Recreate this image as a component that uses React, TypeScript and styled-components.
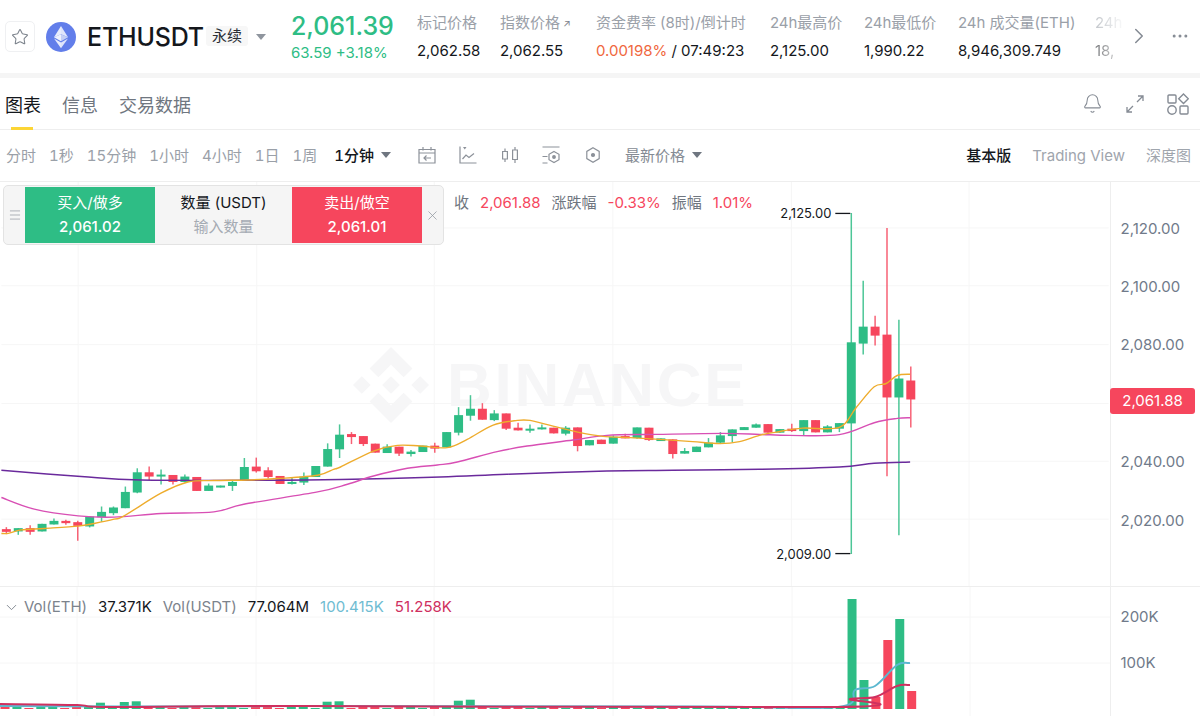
import { createGlobalStyle, styled } from "styled-components";
import { Bell, ChevronDown, ChevronRight, Ellipsis, Menu, Star, X } from "lucide-react";

const GREEN = "#2ebd85";
const RED = "#f6465d";

const GlobalStyle = createGlobalStyle`
  html, body {
    margin: 0;
    padding: 0;
    background: #fff;
    overflow: hidden;
  }
  * { box-sizing: border-box; }
  body {
    font-family: Inter, "Noto Sans CJK SC", sans-serif;
    color: #1e2329;
  }
`;

const Page = styled.div`
  width: 1200px;
  height: 716px;
  overflow: hidden;
  display: flex;
  flex-direction: column;
`;

/* top ticker */
const Ticker = styled.header`
  height: 78px;
  flex: none;
  display: flex;
  align-items: flex-start;
  border-bottom: 5px solid #f5f5f5;
  padding: 0 0 0 5px;
`;

const StarBox = styled.div`
  width: 30px;
  height: 31px;
  margin-top: 21px;
  border: 1px solid #eff0f2;
  border-radius: 5px;
  display: flex;
  align-items: center;
  justify-content: center;
  color: #7c838c;
`;

const Coin = styled.svg`
  width: 30px;
  height: 30px;
  margin: 22px 0 0 11px;
  flex: none;
`;

const Symbol = styled.div`
  margin: 21px 0 0 11px;
  font-size: 25px;
  line-height: 32px;
  font-weight: 500;
  letter-spacing: -0.2px;
  color: #14171c;
`;

const Perp = styled.div`
  margin: 26px 0 0 2px;
  padding: 0 6px;
  height: 20px;
  background: #f7f7f7;
  border-radius: 3px;
  font-size: 15px;
  line-height: 20px;
  color: #2b2f36;
`;

const Caret = styled.span<{ $dark?: boolean }>`
  display: inline-block;
  width: 0;
  height: 0;
  border-left: 5.5px solid transparent;
  border-right: 5.5px solid transparent;
  border-top: 6px solid ${(p) => (p.$dark ? "#6f7680" : "#8f959e")};
`;

const SymbolCaret = styled(Caret)`
  margin: 34px 0 0 8px;
`;

const PriceBlock = styled.div`
  margin: 11px 0 0 25px;
  width: 126px;
  flex: none;
`;

const LastPrice = styled.div`
  font-size: 25px;
  line-height: 30px;
  font-weight: 500;
  color: ${GREEN};
`;

const Change = styled.div`
  font-size: 15px;
  line-height: 20px;
  margin-top: 2px;
  color: ${GREEN};
`;

const Stats = styled.div`
  display: flex;
  width: 709px;
  flex: none;
  padding-top: 13px;
`;

const Stat = styled.div<{ $w: number }>`
  width: ${(p) => p.$w}px;
  flex: none;
`;

const FadedStat = styled(Stat)`
  mask-image: linear-gradient(to right, rgba(0, 0, 0, 0.6), transparent);
`;

const StatLabel = styled.div`
  font-size: 15px;
  line-height: 20px;
  color: #9aa0a8;
  white-space: nowrap;
  display: flex;
  align-items: center;
`;

const LinkMark = styled.span`
  margin-left: 3px;
  font-size: 10px;
  color: #7c838c;
`;

const StatValue = styled.div`
  margin-top: 8px;
  font-size: 15px;
  line-height: 20px;
  color: #14171c;
  white-space: nowrap;
`;

const Funding = styled.span`
  color: #f0673e;
`;

const TickerEnd = styled.div`
  margin-top: 23px;
  display: flex;
  align-items: center;
  gap: 18px;
  color: #858b94;
`;

/* tabs */
const TabBar = styled.nav`
  height: 52px;
  flex: none;
  display: flex;
  align-items: center;
  padding: 0 11px 0 5px;
  gap: 21px;
  border-bottom: 1px solid #eeeeee;
`;

const Tab = styled.div<{ $active?: boolean }>`
  position: relative;
  font-size: 18px;
  line-height: 55px;
  height: 52px;
  color: ${(p) => (p.$active ? "#14171c" : "#6f7680")};

  &::after {
    content: "";
    display: ${(p) => (p.$active ? "block" : "none")};
    position: absolute;
    left: 6px;
    bottom: 0;
    width: 22px;
    height: 3px;
    background: #fcd535;
  }
`;

const TabTools = styled.div`
  margin-left: auto;
  display: flex;
  align-items: center;
  gap: 23px;
  color: #858b94;
`;

/* chart toolbar */
const Toolbar = styled.div`
  height: 52px;
  flex: none;
  display: flex;
  align-items: center;
  padding: 0 9px 2px 6px;
  border-bottom: 1px solid #eeeeee;
  font-size: 15px;
  color: #9aa0a8;
`;

const Interval = styled.div<{ $active?: boolean }>`
  margin-right: 13px;
  white-space: nowrap;
  font-variant-numeric: tabular-nums;
  color: ${(p) => (p.$active ? "#14171c" : "#9aa0a8")};
  font-weight: ${(p) => (p.$active ? 500 : 400)};
`;

const ActiveInterval = styled(Interval)`
  margin: 0 7px 0 4px;
`;

const ToolIcons = styled.div`
  display: flex;
  gap: 21.5px;
  margin: 1px 0 0 26px;
  color: #8c9199;
`;

const PriceType = styled.div`
  margin-left: 22px;
  display: flex;
  align-items: center;
  gap: 7px;
  color: #858b94;
`;

const Views = styled.div`
  margin-left: auto;
  display: flex;
  align-items: baseline;
  gap: 21px;
`;

const ViewName = styled.div<{ $active?: boolean }>`
  color: ${(p) => (p.$active ? "#14171c" : "#9fa5ad")};
  font-weight: ${(p) => (p.$active ? 500 : 400)};
`;

/* chart panes */
const Pane = styled.section<{ $h: number }>`
  height: ${(p) => p.$h}px;
  flex: none;
  display: flex;
`;

const MainPane = styled(Pane)`
  border-bottom: 1px solid #eeeeee;
`;

const Canvas = styled.div`
  position: relative;
  width: 1110px;
  flex: none;
  overflow: hidden;
`;

const Drawing = styled.svg`
  position: absolute;
  inset: 0;
  width: 1110px;
  height: 100%;
`;

const Axis = styled.div<{ $top: number }>`
  position: relative;
  flex: 1;
  border-left: 1px solid #eeeeee;
  padding: ${(p) => p.$top}px 0 0 9.5px;
`;

const Tick = styled.div<{ $h: number }>`
  height: ${(p) => p.$h}px;
  display: flex;
  align-items: center;
  font-size: 15px;
  color: #707a8a;
`;

const PriceTag = styled.div`
  position: absolute;
  left: -1px;
  top: 206px;
  width: 85px;
  height: 26px;
  border-radius: 3px;
  background: ${RED};
  color: #fff;
  font-size: 15px;
  line-height: 26px;
  text-align: center;
`;

const Watermark = styled.div`
  position: absolute;
  left: 353px;
  top: 164px;
  display: flex;
  align-items: center;
  gap: 18px;
  color: #f6f6f7;
`;

const WatermarkText = styled.span`
  font-family: "Liberation Sans", sans-serif;
  font-size: 62px;
  line-height: 78px;
  font-weight: 700;
  letter-spacing: 2.7px;
`;

const OrderPanel = styled.div`
  position: absolute;
  left: 3px;
  top: 3px;
  width: 441px;
  height: 60px;
  display: flex;
  align-items: stretch;
  padding: 1px 0;
  background: #f5f5f5;
  border: 1px solid #e3e3e3;
  border-radius: 5px;
`;

const PanelEdge = styled.div<{ $w: number }>`
  width: ${(p) => p.$w}px;
  flex: none;
  display: flex;
  align-items: center;
  justify-content: center;
  color: #8f959e;
`;

const OrderButton = styled.div<{ $bg: string }>`
  width: 130px;
  flex: none;
  background: ${(p) => p.$bg};
  color: #fff;
  text-align: center;
  font-size: 15px;
  line-height: 24px;
  padding-top: 4px;
`;

const OrderPrice = styled.div`
  font-weight: 500;
`;

const QtyBox = styled.div`
  flex: 1;
  text-align: center;
  font-size: 15px;
  line-height: 24px;
  padding-top: 4px;
  color: #14171c;
`;

const QtyHint = styled.div`
  color: #a5abb3;
`;

const Legend = styled.div`
  position: absolute;
  left: 454px;
  top: 11px;
  display: flex;
  gap: 11px;
  font-size: 15px;
  line-height: 20px;
  color: #6f7680;
`;

const Down = styled.span`
  color: ${RED};
`;

const VolLegend = styled.div`
  position: absolute;
  left: 3px;
  top: 10px;
  display: flex;
  align-items: center;
  gap: 11px;
  font-size: 15px;
  line-height: 20px;
  color: #7c838c;
`;

const VolToggle = styled(ChevronDown)`
  margin-right: -7px;
`;

const VolNumber = styled.span<{ $c: string }>`
  color: ${(p) => p.$c};
`;

/* top, bottom, high, low in page pixels; g = rising */
type Candle = [string, number, number, number?, number?];

const candles: Candle[] = [
  ["r", 530, 532.7, 528, 535], ["g", 529, 532.3, 529, 535.7], ["r", 529, 532.7, 526, 535.7], ["g", 524.7, 532.3],
  ["g", 521.7, 525.3, 519.3], ["r", 521.7, 524, 520.7, 525.7], ["r", 523, 526.7, 521.7, 541.7], ["g", 517.3, 527.3, 517.3, 528.3],
  ["g", 512.7, 518, 507.3, 522.7], ["g", 508.3, 514, 507.3, 516], ["g", 492.7, 509, 487.3], ["g", 473, 493.3, 469, 494],
  ["r", 473, 477.3, 467.3, 480.7], ["g", 475.3, 477.3, 470.3, 485.3], ["r", 475.7, 482.7, 475.7, 485.3], ["g", 477.3, 482.7, 475.3, 483.3],
  ["r", 477.7, 491.7], ["g", 486.3, 491.7, 484.3], ["g", 486.3, 488.3], ["g", 482.7, 486.7, 480.7, 491.7],
  ["g", 467.7, 480.7, 458.7, 481.3], ["r", 467.3, 472, 458.3, 473.3], ["r", 471, 477.7, 468, 479.3], ["r", 476.7, 484.7],
  ["g", 482.7, 484.7, 478.7, 485.3], ["g", 477.3, 483.3, 473.3, 485.7], ["g", 466.7, 477.7], ["g", 449.7, 467.3, 444],
  ["g", 435.3, 450, 425, 458.7], ["r", 434.7, 437.7, 432.7, 444.7], ["r", 436.7, 444.7, 436.7, 446.7], ["r", 444.3, 453.3],
  ["g", 447.3, 453.7, 445], ["r", 447.3, 454.3, 447.3, 456.7], ["g", 452.3, 454.7, 450.7, 457.3], ["g", 446.3, 452.7],
  ["r", 446.3, 449.3, 443.3, 453.3], ["g", 432.7, 448], ["g", 415.7, 433.3, 407.7, 436], ["g", 409.3, 416.3, 395.7, 421.3],
  ["r", 409.3, 420.3, 403.7], ["g", 414, 420.7, 410.7, 421.7], ["r", 414, 429.3, 414, 430.7], ["r", 428.3, 431, 423.3],
  ["g", 429.3, 431.3, 425, 433.3], ["g", 428, 430, 425], ["r", 428.3, 434], ["g", 428.3, 434.3, 426.7, 436],
  ["r", 428, 446.7, 428, 452], ["g", 440.7, 446], ["r", 440.3, 444.7], ["g", 437.3, 444.3, 436],
  ["r", 436.7, 439, 434.3], ["g", 428, 438.7, 428, 439.3], ["r", 428.3, 440.7, 428.3, 441.7], ["g", 439, 441.7],
  ["r", 440, 454.7, 440, 459.3], ["g", 451.7, 454.3, 448.7], ["g", 447.3, 452.7], ["g", 443.3, 448, 438.7],
  ["g", 436, 443.3, 432.7, 444.7], ["g", 430, 436.7, 430, 442.7], ["g", 427.7, 430.7], ["g", 425, 428.3, 424],
  ["r", 424.7, 433.3], ["g", 429.7, 433.3], ["r", 429.3, 431.7, 424.3, 432.7], ["g", 420.7, 431.7, 420.7, 436],
  ["r", 420.7, 433], ["g", 427, 433, 425.7], ["g", 423.7, 429.3, 423.7, 432.7], ["g", 342.7, 424, 213, 555],
  ["g", 327, 344, 281, 355], ["r", 327, 336, 316, 346], ["r", 335, 398, 228, 477], ["g", 379, 398, 320, 536],
  ["r", 381, 400, 367, 428],
];

const candleX = (i: number) => 5 + i * 11.93;

type Pt = [number, number];

// catmull-rom through the points, so the averages bend like the real ones
function smooth(pts: Pt[]) {
  let d = `M${pts[0][0]} ${pts[0][1]}`;
  for (let i = 0; i < pts.length - 1; i++) {
    const p0 = pts[Math.max(i - 1, 0)];
    const p1 = pts[i];
    const p2 = pts[i + 1];
    const p3 = pts[Math.min(i + 2, pts.length - 1)];
    const k = 1 / 6;
    d += ` C${p1[0] + (p2[0] - p0[0]) * k} ${p1[1] + (p2[1] - p0[1]) * k} ${p2[0] - (p3[0] - p1[0]) * k} ${
      p2[1] - (p3[1] - p1[1]) * k
    } ${p2[0]} ${p2[1]}`;
  }
  return d;
}

const ma7: Pt[] = [
  [0, 534.3], [7, 534.3], [20, 530.7], [43, 529.3], [77, 527], [93, 524.3], [113, 520], [123, 516.7], [160, 494],
  [187, 482.7], [213, 481.3], [247, 480.7], [277, 479.3], [317, 476], [333, 470], [340, 467.7], [373, 451.7],
  [397, 446], [420, 446.7], [447, 448.3], [467, 440], [493, 425.7], [517, 421], [530, 421], [553, 426.7],
  [580, 433.3], [603, 437], [630, 438.3], [660, 440], [693, 442.3], [720, 444.3], [740, 442.3], [760, 436],
  [777, 432.7], [803, 428.7], [840, 428], [857, 408], [875, 387.3], [887, 384], [898, 376], [911, 374.7],
];
const ma25: Pt[] = [
  [0, 498.3], [33, 510], [77, 516.7], [113, 518], [160, 514.3], [213, 512.7], [243, 505], [317, 492.7], [347, 485],
  [373, 476.7], [407, 469], [437, 465.7], [457, 462.7], [497, 452.3], [527, 446.7], [573, 440.7], [607, 436],
  [657, 435], [723, 434], [760, 435], [790, 436], [840, 435.3], [875, 423.3], [898, 419], [911, 418.3],
];
const ma99: Pt[] = [
  [0, 471], [80, 477.3], [140, 480.7], [267, 481], [340, 480.3], [440, 477.7], [507, 475], [607, 471.7],
  [673, 471], [760, 470], [840, 467.7], [875, 464], [911, 462.7],
];

const volTops: Record<number, number> = {
  8: 702.7, 10: 702, 11: 701.3, 27: 701.7, 28: 701.3, 38: 700.7, 39: 699.7,
  71: 599, 72: 680, 73: 697, 74: 640, 75: 619, 76: 691,
};

const volMaBlue: Pt[] = [
  [0, 706], [120, 706.5], [300, 706], [700, 706.5], [838, 707], [855, 690], [875, 686], [897, 665], [910, 663],
];
const volMaRed: Pt[] = [
  [0, 704], [77, 705], [110, 707], [300, 706], [838, 707], [850, 699], [875, 697], [897, 686], [910, 685],
];

const gridX = [77, 256, 434, 613, 792, 970];

const axisTicks = ["2,120.00", "2,100.00", "2,080.00", "", "2,040.00", "2,020.00"];

function EthLogo() {
  return (
    <Coin viewBox="0 0 30 30">
      <circle cx="15" cy="15" r="15" fill="#627eea" />
      <path d="M15 4v8.200l7 3.100z" fill="#dfe5fb" />
      <path d="M15 4l-7 11.300 7-3.100z" fill="#fff" opacity="0.85" />
      <path d="M15 20.500v5.700l7-9.700z" fill="#dfe5fb" />
      <path d="M15 20.500v5.700l-7-9.700z" fill="#fff" opacity="0.85" />
      <path d="M15 19.200l7-4-7-3z" fill="#c4cff6" />
      <path d="M15 19.200l-7-4 7-3z" fill="#eef1fd" />
    </Coin>
  );
}

function ExpandIcon() {
  return (
    <svg width="18" height="18" viewBox="0 0 18 18" fill="none" stroke="currentColor" strokeWidth="1.3">
      <path d="M11 7l6-6M12 1h5v5M7 11l-6 6M1 12v5h5" />
    </svg>
  );
}

function LayoutIcon() {
  return (
    <svg width="22" height="22" viewBox="0 0 22 22" fill="none" stroke="currentColor" strokeWidth="1.4">
      <rect x="1" y="2" width="8" height="8" rx="1" />
      <path d="M16.500 1l4.800 4.800-4.800 4.800-4.800-4.800z" />
      <circle cx="5" cy="17" r="4.200" />
      <rect x="13" y="13" width="8" height="8" rx="1" />
    </svg>
  );
}

function ReplayIcon() {
  return (
    <svg width="20" height="20" viewBox="-1 -1 20 20" fill="none" stroke="currentColor" strokeWidth="1.2">
      <path d="M1 3.500h16V17H1zM1 7h16M5 1v3.500M13 1v3.500M13 12H6M8.500 9.500L6 12l2.500 2.500" />
    </svg>
  );
}

function LineToolIcon() {
  return (
    <svg width="20" height="20" viewBox="-1 -1 20 20" fill="none" stroke="currentColor" strokeWidth="1.2">
      <path d="M1 0.500V17h16.500M3.500 13L7 9l3 2.500 5-4" />
      <path d="M4 1h3.500L5.750 3.500z" fill="currentColor" stroke="none" />
    </svg>
  );
}

function CandleIcon() {
  return (
    <svg width="20" height="20" viewBox="-2 -2 20 20" fill="none" stroke="currentColor" strokeWidth="1.2">
      <path d="M0.600 4.500h4.800V12H0.600zM3 1.500v3M3 12v3M10.600 3h4.800v9.500h-4.800zM13 0v3M13 12.500V16" />
    </svg>
  );
}

function IndicatorIcon() {
  return (
    <svg width="20" height="20" viewBox="-1 -1 20 20" fill="none" stroke="currentColor" strokeWidth="1.2">
      <path d="M0.500 1h17M0.500 10.500h5M0.500 17h5" />
      <path d="M12 5.500l5 2.800v5.400l-5 2.800-5-2.800V8.300z" />
      <circle cx="12" cy="11" r="1.300" fill="currentColor" />
    </svg>
  );
}

function HexIcon() {
  return (
    <svg width="20" height="20" viewBox="-3 -2 20 20" fill="none" stroke="currentColor" strokeWidth="1.2">
      <path d="M7 0.800l6.200 3.600v7.200L7 15.200 0.800 11.600V4.400z" />
      <circle cx="7" cy="8" r="1.500" fill="currentColor" />
    </svg>
  );
}

function DiamondMark() {
  return (
    <svg width="76" height="76" viewBox="0 0 78 78" fill="currentColor">
      <path d="M39 0l22 22-9 9-13-13-13 13-9-9z" />
      <path d="M39 78l22-22-9-9-13 13-13-13-9 9z" />
      <path d="M39 30l9 9-9 9-9-9zM9 30l9 9-9 9-9-9zM69 30l9 9-9 9-9-9z" />
    </svg>
  );
}

export default function App() {
  return (
    <Page>
      <GlobalStyle />
      <Ticker>
        <StarBox>
          <Star size={18} strokeWidth={1.4} />
        </StarBox>
        <EthLogo />
        <Symbol>ETHUSDT</Symbol>
        <Perp>永续</Perp>
        <SymbolCaret />
        <PriceBlock>
          <LastPrice>2,061.39</LastPrice>
          <Change>63.59 +3.18%</Change>
        </PriceBlock>
        <Stats>
          <Stat $w={83}>
            <StatLabel>标记价格</StatLabel>
            <StatValue>2,062.58</StatValue>
          </Stat>
          <Stat $w={96}>
            <StatLabel>
              指数价格<LinkMark>↗</LinkMark>
            </StatLabel>
            <StatValue>2,062.55</StatValue>
          </Stat>
          <Stat $w={174}>
            <StatLabel>资金费率 (8时)/倒计时</StatLabel>
            <StatValue>
              <Funding>0.00198%</Funding> / 07:49:23
            </StatValue>
          </Stat>
          <Stat $w={94}>
            <StatLabel>24h最高价</StatLabel>
            <StatValue>2,125.00</StatValue>
          </Stat>
          <Stat $w={94}>
            <StatLabel>24h最低价</StatLabel>
            <StatValue>1,990.22</StatValue>
          </Stat>
          <Stat $w={137}>
            <StatLabel>24h 成交量(ETH)</StatLabel>
            <StatValue>8,946,309.749</StatValue>
          </Stat>
          <FadedStat $w={31}>
            <StatLabel>24h</StatLabel>
            <StatValue>18,</StatValue>
          </FadedStat>
        </Stats>
        <TickerEnd>
          <ChevronRight size={26} strokeWidth={1.4} />
          <Ellipsis size={20} strokeWidth={1.6} />
        </TickerEnd>
      </Ticker>

      <TabBar>
        <Tab $active>图表</Tab>
        <Tab>信息</Tab>
        <Tab>交易数据</Tab>
        <TabTools>
          <Bell size={21} strokeWidth={1.2} />
          <ExpandIcon />
          <LayoutIcon />
        </TabTools>
      </TabBar>

      <Toolbar>
        <Interval>分时</Interval>
        <Interval>1秒</Interval>
        <Interval>15分钟</Interval>
        <Interval>1小时</Interval>
        <Interval>4小时</Interval>
        <Interval>1日</Interval>
        <Interval>1周</Interval>
        <ActiveInterval $active>1分钟</ActiveInterval>
        <Caret $dark />
        <ToolIcons>
          <ReplayIcon />
          <LineToolIcon />
          <CandleIcon />
          <IndicatorIcon />
          <HexIcon />
        </ToolIcons>
        <PriceType>
          最新价格 <Caret $dark />
        </PriceType>
        <Views>
          <ViewName $active>基本版</ViewName>
          <ViewName>Trading View</ViewName>
          <ViewName>深度图</ViewName>
        </Views>
      </Toolbar>

      <MainPane $h={405}>
        <Canvas>
          <Watermark>
            <DiamondMark />
            <WatermarkText>BINANCE</WatermarkText>
          </Watermark>
          <Drawing viewBox="0 182 1110 405">
            {[228, 286, 345, 404, 462, 520].map((y) => (
              <line key={y} x1="0" x2="1110" y1={y} y2={y} stroke="#f6f6f6" />
            ))}
            {gridX.map((x) => (
              <line key={x} x1={x} x2={x} y1="182" y2="587" stroke="#f6f6f6" />
            ))}
            {candles.map(([dir, top, bottom, high, low], i) => {
              const color = dir === "g" ? GREEN : RED;
              const x = candleX(i);
              return (
                <g key={i}>
                  <line
                    x1={x}
                    x2={x}
                    y1={high ?? top}
                    y2={low ?? bottom}
                    stroke={color}
                    strokeWidth="1.5"
                    opacity="0.85"
                  />
                  <rect x={x - 4.5} y={top} width="9" height={bottom - top} fill={color} />
                </g>
              );
            })}
            <path d={smooth(ma99)} fill="none" stroke="#6a2a9c" strokeWidth="1.4" />
            <path d={smooth(ma25)} fill="none" stroke="#d84fb4" strokeWidth="1.4" />
            <path d={smooth(ma7)} fill="none" stroke="#eeac2c" strokeWidth="1.4" />
            <line x1="836" x2="851" y1="213.500" y2="213.500" stroke="#14171c" strokeWidth="1.300" />
            <line x1="836" x2="851" y1="554.500" y2="554.500" stroke="#14171c" strokeWidth="1.300" />
            <text x="832" y="218" textAnchor="end" fontSize="13" fill="#14171c">
              2,125.00
            </text>
            <text x="832" y="560" textAnchor="end" fontSize="13" fill="#14171c">
              2,009.00
            </text>
          </Drawing>
          <OrderPanel>
            <PanelEdge $w={21}>
              <Menu size={14} strokeWidth={1.2} />
            </PanelEdge>
            <OrderButton $bg={GREEN}>
              买入/做多
              <OrderPrice>2,061.02</OrderPrice>
            </OrderButton>
            <QtyBox>
              数量 (USDT)
              <QtyHint>输入数量</QtyHint>
            </QtyBox>
            <OrderButton $bg={RED}>
              卖出/做空
              <OrderPrice>2,061.01</OrderPrice>
            </OrderButton>
            <PanelEdge $w={21}>
              <X size={15} strokeWidth={1.2} />
            </PanelEdge>
          </OrderPanel>
          <Legend>
            <span>收</span>
            <Down>2,061.88</Down>
            <span>涨跌幅</span>
            <Down>-0.33%</Down>
            <span>振幅</span>
            <Down>1.01%</Down>
          </Legend>
        </Canvas>
        <Axis $top={17}>
          {axisTicks.map((t, i) => (
            <Tick key={i} $h={58.4}>
              {t}
            </Tick>
          ))}
          <PriceTag>2,061.88</PriceTag>
        </Axis>
      </MainPane>

      <Pane $h={129}>
        <Canvas>
          <Drawing viewBox="0 587 1110 129">
            {[617, 663].map((y) => (
              <line key={y} x1="0" x2="1110" y1={y} y2={y} stroke="#f6f6f6" />
            ))}
            {gridX.map((x) => (
              <line key={x} x1={x} x2={x} y1="587" y2="716" stroke="#f6f6f6" />
            ))}
            {candles.map(([dir], i) => {
              const top = volTops[i] ?? 706 + (i % 3);
              return (
                <rect
                  key={i}
                  x={candleX(i) - 4.5}
                  y={top}
                  width="9"
                  height={709 - top}
                  fill={dir === "g" ? GREEN : RED}
                />
              );
            })}
            <path d={smooth(volMaBlue)} fill="none" stroke="#5bb8d0" strokeWidth="2" />
            <path d={smooth(volMaRed)} fill="none" stroke="#cf305f" strokeWidth="2" />
          </Drawing>
          <VolLegend>
            <VolToggle size={17} strokeWidth={1.3} />
            <span>Vol(ETH)</span>
            <VolNumber $c="#14171c">37.371K</VolNumber>
            <span>Vol(USDT)</span>
            <VolNumber $c="#14171c">77.064M</VolNumber>
            <VolNumber $c="#6fbcd2">100.415K</VolNumber>
            <VolNumber $c="#cf305f">51.258K</VolNumber>
          </VolLegend>
        </Canvas>
        <Axis $top={6}>
          <Tick $h={46}>200K</Tick>
          <Tick $h={46}>100K</Tick>
        </Axis>
      </Pane>
    </Page>
  );
}
